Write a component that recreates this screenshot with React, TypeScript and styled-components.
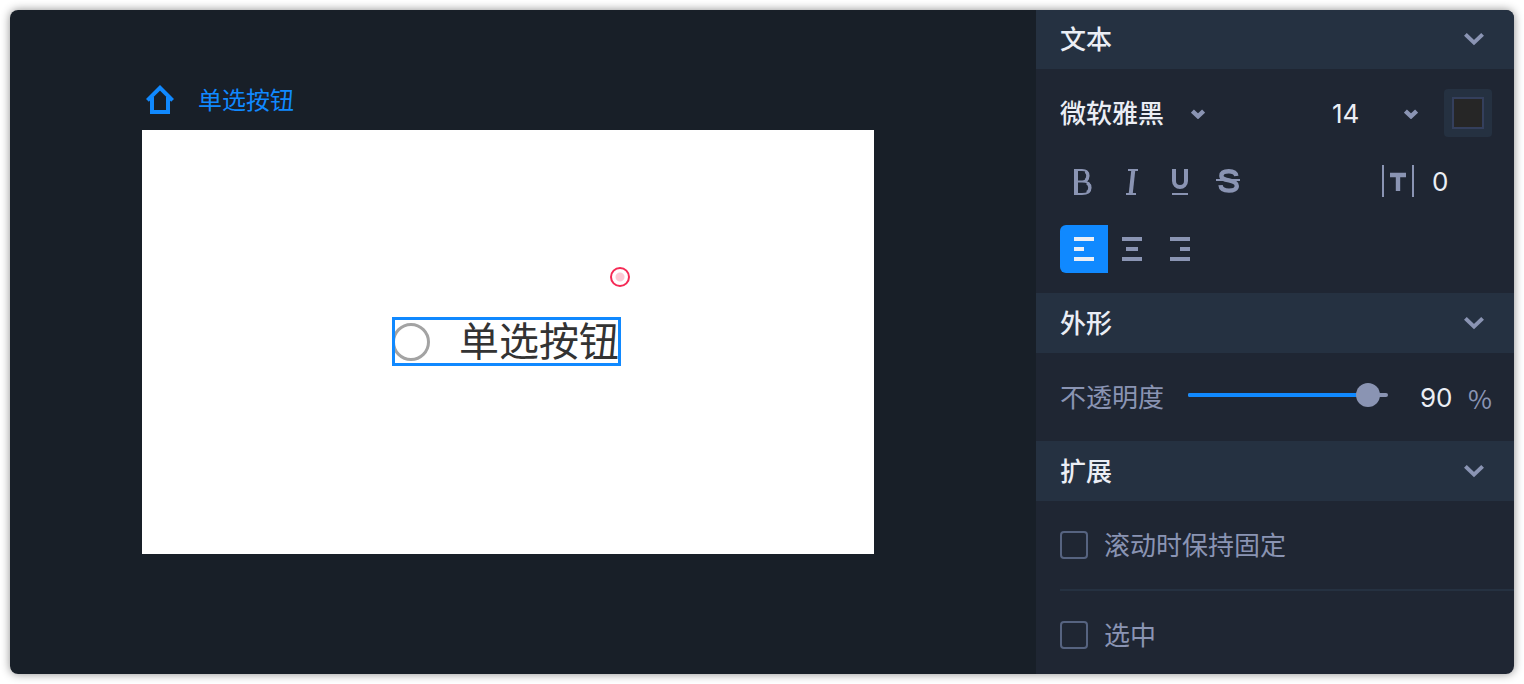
import React, { useState } from "react";
import styled, { createGlobalStyle } from "styled-components";

const color = {
  canvas: "#181f28",
  panel: "#1f2633",
  raised: "#253141",
  text: "#ebeef5",
  muted: "#8a94b3",
  outline: "#566380",
  blue: "#1089ff",
  pin: "#f52a55",
};

const GlobalStyle = createGlobalStyle`
  * { box-sizing: border-box; }
  body {
    margin: 0;
    background: #fff;
    color: ${color.text};
    font-family: Inter, "Noto Sans CJK SC", sans-serif;
    font-size: 26px;
    line-height: 33px;
  }
  button, input, select { font: inherit; color: inherit; margin: 0; padding: 0; }
`;

const Page = styled.div`
  height: 100vh;
  padding: 10px;
  overflow: hidden;
`;

const Frame = styled.div`
  display: flex;
  height: 100%;
  border-radius: 8px;
  overflow: hidden;
`;

const Shadow = styled.div`
  height: 100%;
  border-radius: 8px;
  box-shadow: 0 0 10px rgba(0, 0, 0, 0.45);
`;

const Canvas = styled.main`
  flex: 1;
  min-width: 0;
  display: flex;
  flex-direction: column;
  padding: 60px 162px 120px 132px;
  background: ${color.canvas};
`;

const ArtboardTitle = styled.a`
  display: flex;
  align-items: center;
  gap: 24px;
  height: 60px;
  padding-left: 4px;
  color: ${color.blue};
  font-size: 24px;
  text-decoration: none;
  white-space: nowrap;
`;

const Artboard = styled.div`
  position: relative;
  flex: 1;
  background: #fff;
`;

const RadioWidget = styled.label`
  position: absolute;
  left: 250px;
  top: 187px;
  display: flex;
  align-items: center;
  gap: 29px;
  height: 49px;
  padding-right: 2px;
  color: #333;
  font-size: 40px;
  line-height: 49px;
  white-space: nowrap;

  &::after {
    content: "";
    position: absolute;
    inset: 0;
    border: 3px solid ${color.blue};
  }
`;

const Radio = styled.input`
  appearance: none;
  width: 38px;
  height: 38px;
  border: 3px solid #a3a3a3;
  border-radius: 50%;
`;

const Pin = styled.span`
  position: absolute;
  left: 468px;
  top: 137px;
  width: 20px;
  height: 20px;
  border: 2px solid ${color.pin};
  border-radius: 50%;
  background: radial-gradient(circle, #fccad5 0 4px, #fff 5px);
`;

const Panel = styled.aside`
  flex: 0 0 478px;
  margin-top: -1px;
  background: ${color.panel};
`;

const SectionHeader = styled.button`
  display: flex;
  align-items: center;
  justify-content: space-between;
  width: 100%;
  height: 60px;
  padding: 0 30px 0 24px;
  border: 0;
  background: ${color.raised};
  font-weight: 500;
`;

const SectionBody = styled.div`
  display: flex;
  flex-direction: column;
  gap: 20px;
  padding: 20px 22px 20px 24px;
`;

const Row = styled.div`
  display: flex;
  align-items: center;
  height: 48px;
`;

const Spacer = styled.span`
  flex: 1;
`;

const SelectBox = styled.span<{ $width: number }>`
  display: grid;
  align-items: center;
  width: ${(p) => p.$width}px;

  > * { grid-area: 1 / 1; }
  > svg { justify-self: end; pointer-events: none; }
`;

const Select = styled.select<{ $medium?: boolean }>`
  appearance: none;
  width: 100%;
  height: 48px;
  border: 0;
  background: transparent;
  font-weight: ${(p) => (p.$medium ? 500 : 400)};
`;

const Swatch = styled.input`
  appearance: none;
  width: 48px;
  height: 48px;
  margin-left: 26px;
  padding: 8px;
  border: 0;
  border-radius: 4px;
  background: ${color.raised};

  &::-webkit-color-swatch-wrapper { padding: 0; }
  &::-webkit-color-swatch { border: 2px solid #343f5c; border-radius: 0; }
`;

const ToolButton = styled.button<{ $active?: boolean }>`
  width: 48px;
  height: 48px;
  border: 0;
  border-radius: 6px 0 0 6px;
  background: ${(p) => (p.$active ? color.blue : "transparent")};
  color: ${(p) => (p.$active ? color.text : color.muted)};

  > svg { display: block; }
`;

const NumberLabel = styled.label`
  display: flex;
  align-items: center;
  gap: 18px;
  color: ${color.muted};
`;

const NumberInput = styled.input<{ $width: number }>`
  width: ${(p) => p.$width}px;
  height: 48px;
  border: 0;
  background: transparent;
  color: ${color.text};
`;

const FieldLabel = styled.label`
  color: ${color.muted};
  white-space: nowrap;
`;

const SliderBox = styled.span`
  flex: 1;
  display: grid;
  align-items: center;
  margin: 0 32px 0 24px;
  padding-bottom: 4px;

  > * { grid-area: 1 / 1; }
`;

const SliderTrack = styled.span`
  height: 4px;
  border-radius: 2px;
  overflow: hidden;
  background: ${color.muted};
`;

const SliderFill = styled.span`
  display: block;
  height: 100%;
  background: ${color.blue};
`;

const Slider = styled.input`
  appearance: none;
  height: 24px;
  margin: 0 -12px;
  background: transparent;

  &::-webkit-slider-thumb {
    appearance: none;
    width: 24px;
    height: 24px;
    border-radius: 50%;
    background: ${color.muted};
  }
`;

const Unit = styled.span`
  width: 24px;
  color: ${color.muted};
  font-family: "Noto Sans CJK SC", sans-serif;
`;

const CheckRow = styled.label`
  display: flex;
  align-items: center;
  gap: 16px;
  height: 88px;
  margin-left: 24px;
  color: ${color.muted};

  & + & {
    height: 90px;
    border-top: 2px solid ${color.raised};
  }
`;

const CheckBox = styled.input`
  appearance: none;
  width: 28px;
  height: 28px;
  border: 2px solid ${color.outline};
  border-radius: 4px;

  &:checked { background: ${color.blue}; }
`;

const BigChevron = () => (
  <svg width="20" height="14" viewBox="0 0 20 14" fill="none" stroke={color.muted} strokeWidth="4">
    <path d="M1.400 2.400 10 10.600l8.600-8.200" />
  </svg>
);

const SmallChevron = () => (
  <svg width="14" height="12" viewBox="0 0 14 12" fill="none" stroke={color.muted} strokeWidth="4.400">
    <path d="M1.400 4 7 9.300 12.600 4" />
  </svg>
);

const HomeIcon = () => (
  <svg width="28" height="30" viewBox="0 0 28 30" fill="none" stroke="currentColor" strokeWidth="4">
    <path d="M1.400 15.400 14 2.800l12.600 12.600" />
    <path d="M6 12v15h16V12" />
  </svg>
);

const ToolIcon = ({ children }: { children: React.ReactNode }) => (
  <svg width="48" height="48" viewBox="0 0 48 48" fill="none" stroke="currentColor" strokeWidth="4">
    {children}
  </svg>
);

const textStyles = [
  {
    name: "粗体",
    icon: (
      <>
        <path d="M16 12v26" />
        <path d="M14 13h8q6.500 0 6.500 5.800T22 24.500h-5M22 24.500q8.500 0 8.500 6.200T22 37h-8" strokeWidth="2" />
        <path d="M25.500 14.500q2.200 1.200 2.200 4.300t-2.200 4.600M27 26q2.700 1.500 2.700 4.700T27 35.400" strokeWidth="3" />
      </>
    ),
  },
  {
    name: "斜体",
    icon: (
      <>
        <path d="M20 13h10M18 37h10" strokeWidth="2" />
        <path d="M25.300 13 22.700 37" />
      </>
    ),
  },
  {
    name: "下划线",
    icon: (
      <>
        <path d="M18 12v12a6 6 0 0 0 12 0V12" />
        <path d="M16 37h16" strokeWidth="2" />
      </>
    ),
  },
  {
    name: "删除线",
    icon: (
      <>
        <path
          d="M32.300 19c-.4-3.300-3.200-4.800-7.500-4.800-4.600 0-7.400 1.700-7.400 4.500 0 2.900 2.800 3.700 7.600 4.700 5.200 1.100 7.800 2.500 7.800 5.500 0 2.900-3 4.700-7.800 4.700-5.100 0-8.200-1.900-8.500-5.500"
          strokeWidth="4.400"
        />
        <path d="M12 23h24" strokeWidth="2" />
      </>
    ),
  },
];

const alignments = [
  { name: "左对齐", lines: "M14 14h20M14 24h10M14 34h20" },
  { name: "居中对齐", lines: "M14 14h20M18 24h12M14 34h20" },
  { name: "右对齐", lines: "M14 14h20M24 24h10M14 34h20" },
];

const Header = ({ children }: { children: string }) => (
  <SectionHeader type="button" aria-expanded="true">
    {children}
    <BigChevron />
  </SectionHeader>
);

export default function App() {
  const [align, setAlign] = useState(0);
  const [opacity, setOpacity] = useState(90);

  return (
    <Page>
      <GlobalStyle />
      <Shadow>
        <Frame>
          <Canvas>
            <ArtboardTitle href="#">
              <HomeIcon />
              单选按钮
            </ArtboardTitle>
            <Artboard>
              <Pin />
              <RadioWidget>
                <Radio type="radio" />
                单选按钮
              </RadioWidget>
            </Artboard>
          </Canvas>

          <Panel>
            <Header>文本</Header>
            <SectionBody>
              <Row>
                <SelectBox $width={145}>
                  <Select $medium aria-label="字体">
                    <option>微软雅黑</option>
                  </Select>
                  <SmallChevron />
                </SelectBox>
                <Spacer />
                <SelectBox $width={86}>
                  <Select aria-label="字号">
                    <option>14</option>
                  </Select>
                  <SmallChevron />
                </SelectBox>
                <Swatch type="color" defaultValue="#262626" aria-label="文字颜色" />
              </Row>
              <Row>
                {textStyles.map((s) => (
                  <ToolButton key={s.name} type="button" aria-label={s.name}>
                    <ToolIcon>{s.icon}</ToolIcon>
                  </ToolButton>
                ))}
                <Spacer />
                <NumberLabel>
                  <svg width="32" height="32" viewBox="0 0 32 32" fill="none" stroke="currentColor" strokeWidth="4">
                    <path d="M1 0v32M31 0v32" strokeWidth="2" />
                    <path d="M8 10h16M16 10v16" strokeWidth="4.400" />
                  </svg>
                  <NumberInput $width={60} defaultValue="0" aria-label="字间距" />
                </NumberLabel>
              </Row>
              <Row>
                {alignments.map((a, i) => (
                  <ToolButton
                    key={a.name}
                    type="button"
                    aria-label={a.name}
                    $active={i === align}
                    onClick={() => setAlign(i)}
                  >
                    <ToolIcon>
                      <path d={a.lines} />
                    </ToolIcon>
                  </ToolButton>
                ))}
              </Row>
            </SectionBody>

            <Header>外形</Header>
            <SectionBody>
              <Row>
                <FieldLabel htmlFor="opacity">不透明度</FieldLabel>
                <SliderBox>
                  <SliderTrack>
                    <SliderFill style={{ width: `${opacity}%` }} />
                  </SliderTrack>
                  <Slider
                    id="opacity"
                    type="range"
                    value={opacity}
                    onChange={(e) => setOpacity(Number(e.target.value))}
                  />
                </SliderBox>
                <NumberInput
                  $width={48}
                  value={opacity}
                  onChange={(e) => setOpacity(Number(e.target.value) || 0)}
                  aria-label="不透明度数值"
                />
                <Unit>%</Unit>
              </Row>
            </SectionBody>

            <Header>扩展</Header>
            <CheckRow>
              <CheckBox type="checkbox" />
              滚动时保持固定
            </CheckRow>
            <CheckRow>
              <CheckBox type="checkbox" />
              选中
            </CheckRow>
          </Panel>
        </Frame>
      </Shadow>
    </Page>
  );
}
